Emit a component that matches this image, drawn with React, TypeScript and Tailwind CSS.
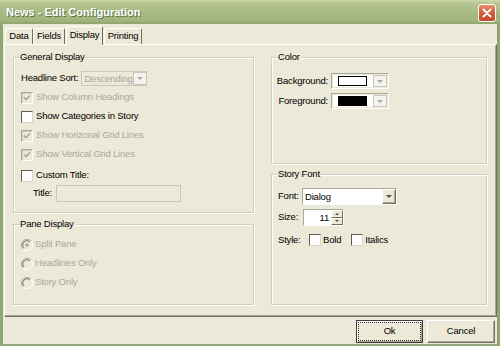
import clsx from 'clsx';

const FONT = "font-['Liberation_Sans',Arial,sans-serif]";

const ArrowButton = ({ disabled, light }: { disabled?: boolean; light?: boolean }) => (
  <span
    className={clsx(
      'flex h-full w-[14px] shrink-0 items-center justify-center border',
      light
        ? 'border-[#C9C7BA] bg-[#F4F3EE]'
        : 'border-t-white border-l-white border-b-[#716F64] border-r-[#716F64] bg-[#ECE9D8] shadow-[inset_-1px_-1px_0_#ACA899]',
    )}
  >
    <span
      className={clsx(
        'h-0 w-0 border-x-[3px] border-t-[3px] border-x-transparent',
        disabled ? 'border-t-[#ACA899]' : 'border-t-[#4D4D4D]',
      )}
    />
  </span>
);

const Check = ({ checked, disabled }: { checked?: boolean; disabled?: boolean }) => (
  <span
    className={clsx(
      'flex h-[12px] w-[12px] shrink-0 items-center justify-center border',
      disabled
        ? 'border-t-[#ACA899] border-l-[#ACA899] border-b-white border-r-white bg-[#ECE9D8] shadow-[inset_1px_1px_0_#D0CDBF]'
        : 'border-t-[#5C5C5C] border-l-[#5C5C5C] border-b-[#D8D6CC] border-r-[#D8D6CC] bg-white',
    )}
  >
    {checked ? (
      <svg width="8" height="8" viewBox="0 0 8 8">
        <path d="M1 3.5 L3 5.5 L7 1.5" fill="none" stroke={disabled ? '#ACA899' : '#000'} strokeWidth="1.6" />
      </svg>
    ) : null}
  </span>
);

const Radio = ({ selected }: { selected?: boolean }) => (
  <svg width="12" height="12" viewBox="0 0 12 12" className="shrink-0">
    <circle cx="6" cy="6" r="5.5" fill="#ECE9D8" />
    <path d="M10 2 A5.5 5.5 0 0 0 2 10" fill="none" stroke="#ACA899" strokeWidth="1" />
    <path d="M9 3 A4.2 4.2 0 0 0 3 9" fill="none" stroke="#716F64" strokeWidth="1" />
    <path d="M2 10 A5.5 5.5 0 0 0 10 2" fill="none" stroke="#FFFFFF" strokeWidth="1" />
    {selected ? <circle cx="6" cy="6" r="1.8" fill="#ACA899" /> : null}
  </svg>
);

const CheckRow = ({ label, checked, disabled, className }: { label: string; checked?: boolean; disabled?: boolean; className?: string }) => (
  <div className={clsx('flex h-[19px] items-center gap-[3px]', className)}>
    <Check checked={checked} disabled={disabled} />
    <span className={disabled ? 'text-[#ACA899]' : 'text-black'}>{label}</span>
  </div>
);

const RadioRow = ({ label, selected }: { label: string; selected?: boolean }) => (
  <div className="flex h-[19px] items-center gap-[2px]">
    <Radio selected={selected} />
    <span className="text-[#ACA899]">{label}</span>
  </div>
);

const Group = ({ title, className, children }: { title: string; className?: string; children: React.ReactNode }) => (
  <div
    className={clsx(
      'relative border border-[#D0D0BF] shadow-[inset_1px_1px_0_#fff,1px_1px_0_#fff]',
      className,
    )}
  >
    <span className="absolute -top-[7px] left-[6px] bg-[#ECE9D8] pr-[1px] leading-[12px]">{title}</span>
    {children}
  </div>
);

const ColorCombo = ({ color }: { color: string }) => (
  <div className="flex h-[16px] w-[58px] items-stretch border border-t-[#ACA899] border-l-[#ACA899] border-b-white border-r-white bg-[#ECE9D8] p-[1px]">
    <div className="flex flex-1 items-center bg-white pl-[5px] pr-[6px]">
      <span className="h-[10px] w-full border border-black" style={{ background: color }} />
    </div>
    <ArrowButton disabled light />
  </div>
);

const Tab = ({ label, active, className }: { label: string; active?: boolean; className?: string }) => (
  <div
    className={clsx(
      'flex items-center justify-center rounded-t-[2px] border-l border-t border-r border-l-white border-t-white border-r-[#716F64] bg-[#ECE9D8]',
      active ? 'relative z-10 -mb-px h-[19px] pb-[2px]' : 'h-[16px]',
      className,
    )}
  >
    {label}
  </div>
);

export default function App() {
  return (
    <div className={clsx('flex h-[346px] w-[500px] flex-col bg-[#ECE9D8] text-[9.5px] tracking-[-0.2px] text-black', FONT)}>
      {/* title bar */}
      <div className="flex h-[24px] shrink-0 items-center justify-between bg-[linear-gradient(180deg,#CDD8AB_0%,#B3C491_15%,#A6B983_55%,#A2B57F_85%,#8EA46C_100%)] pl-[6px] pr-[4px]">
        <span className="text-[11px] font-bold tracking-[0px] text-white [text-shadow:1px_1px_0_#5E7242]">
          News - Edit Configuration
        </span>
        <span className="mt-[2px] flex h-[18px] w-[18px] items-center justify-center rounded-[3px] border border-white bg-[linear-gradient(180deg,#E98E6C_0%,#D4603D_45%,#C24829_100%)]">
          <svg width="10" height="10" viewBox="0 0 10 10">
            <path d="M1.5 1.5 L8.5 8.5 M8.5 1.5 L1.5 8.5" stroke="#fff" strokeWidth="1.9" strokeLinecap="round" />
          </svg>
        </span>
      </div>

      <div className="flex flex-1 flex-col border-x-[3px] border-b-[2px] border-x-[#8FA672] border-b-[#8FA672]">
        {/* tabs */}
        <div className="flex h-[20px] items-end pl-[2px]">
          <Tab label="Data" className="w-[28px]" />
          <Tab label="Fields" className="w-[32px]" />
          <Tab label="Display" active className="ml-[1px] w-[37px]" />
          <Tab label="Printing" className="ml-[1px] w-[38px]" />
        </div>

        {/* panel */}
        <div className="ml-[1px] flex h-[273px] gap-[17px] border border-t-white border-l-white border-b-[#716F64] border-r-[#716F64] pl-[8px] pr-[8px] pt-[12px] shadow-[inset_-1px_-1px_0_#ACA899]">
          <div className="flex w-[241px] flex-col gap-[11px]">
            <Group title="General Display" className="h-[156px] pl-[7px]">
              <div className="mt-[13px] flex h-[15px] items-center gap-[3px]">
                <span>Headline Sort:</span>
                <div className="flex h-[15px] w-[66px] items-stretch border border-[#C9C7BA] bg-[#ECE9D8]">
                  <span className="flex-1 pl-[2px] leading-[13px] text-[#ACA899]">Descending</span>
                  <ArrowButton disabled light />
                </div>
              </div>
              <div className="mt-[2px] flex flex-col">
                <CheckRow label="Show Column Headings" checked disabled />
                <CheckRow label="Show Categories in Story" />
                <CheckRow label="Show Horizonal Grid Lines" checked disabled />
                <CheckRow label="Show Vertical Grid Lines" checked disabled />
                <CheckRow label="Custom Title:" className="mt-[2px]" />
              </div>
              <div className="flex h-[17px] items-center gap-[4px] pl-[12px]">
                <span>Title:</span>
                <div className="h-[17px] w-[125px] border border-[#C9C7BA] bg-[#ECE9D8]" />
              </div>
            </Group>
            <Group title="Pane Display" className="h-[81px] pl-[7px] pt-[10px]">
              <RadioRow label="Split Pane" selected />
              <RadioRow label="Headlines Only" />
              <RadioRow label="Story Only" />
            </Group>
          </div>

          <div className="flex w-[216px] flex-col gap-[10px]">
            <Group title="Color" className="h-[107px] pt-[15px]">
              <div className="flex flex-col gap-[4px]">
                <div className="flex items-center gap-[3px]">
                  <span className="w-[56px] text-right">Background:</span>
                  <ColorCombo color="#FFFFFF" />
                </div>
                <div className="flex items-center gap-[3px]">
                  <span className="w-[56px] text-right">Foreground:</span>
                  <ColorCombo color="#000000" />
                </div>
              </div>
            </Group>
            <Group title="Story Font" className="h-[131px] pl-[6px] pt-[13px]">
              <div className="flex items-center">
                <span className="w-[24px]">Font:</span>
                <div className="flex h-[17px] w-[95px] items-stretch border border-t-[#ACA899] border-l-[#ACA899] border-b-white border-r-white bg-white">
                  <span className="flex-1 pl-[2px] leading-[15px]">Dialog</span>
                  <ArrowButton />
                </div>
              </div>
              <div className="mt-[4px] flex items-center">
                <span className="w-[25px]">Size:</span>
                <div className="flex h-[17px] w-[41px] items-stretch border border-t-[#ACA899] border-l-[#ACA899] border-b-white border-r-white bg-white">
                  <span className="flex-1 pr-[2px] text-right leading-[15px]">11</span>
                  <div className="flex w-[12px] flex-col">
                    <span className="flex flex-1 items-center justify-center border border-t-white border-l-white border-b-[#716F64] border-r-[#716F64] bg-[#ECE9D8]">
                      <span className="h-0 w-0 border-x-[2px] border-b-[2px] border-x-transparent border-b-[#4D4D4D]" />
                    </span>
                    <span className="flex flex-1 items-center justify-center border border-t-white border-l-white border-b-[#716F64] border-r-[#716F64] bg-[#ECE9D8]">
                      <span className="h-0 w-0 border-x-[2px] border-t-[2px] border-x-transparent border-t-[#4D4D4D]" />
                    </span>
                  </div>
                </div>
              </div>
              <div className="mt-[8px] flex h-[12px] items-center">
                <span className="w-[31px]">Style:</span>
                <Check />
                <span className="ml-[2px]">Bold</span>
                <span className="ml-[10px]">
                  <Check />
                </span>
                <span className="ml-[2px]">Italics</span>
              </div>
            </Group>
          </div>
        </div>

        {/* buttons */}
        <div className="flex flex-1 items-start justify-end gap-[4px] pr-[2px] pt-[3px]">
          <button
            type="button"
            className="flex h-[23px] w-[67px] items-center justify-center border border-[#3C3C3C] bg-[#ECE9D8] p-[1px] shadow-[inset_1px_1px_0_#fff,inset_-1px_-1px_0_#ACA899]"
          >
            <span className="flex h-full w-full items-center justify-center border border-dotted border-[#303030]">Ok</span>
          </button>
          <button
            type="button"
            className="flex h-[23px] w-[68px] items-center justify-center border border-t-white border-l-white border-b-[#716F64] border-r-[#716F64] bg-[#ECE9D8] shadow-[inset_-1px_-1px_0_#ACA899]"
          >
            Cancel
          </button>
        </div>
      </div>
    </div>
  );
}
